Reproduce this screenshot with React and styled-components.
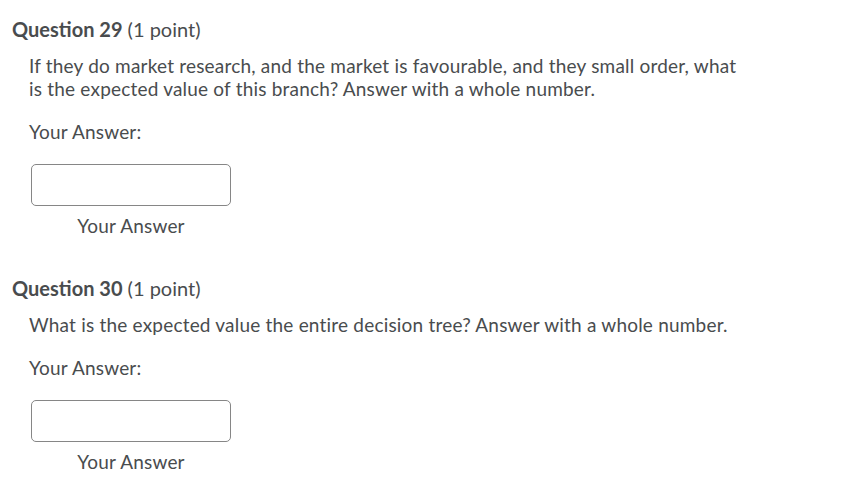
import React from "react";
import styled, { createGlobalStyle } from "styled-components";

const Global = createGlobalStyle`
  html, body { margin: 0; padding: 0; background: #fff; }
  body { font-family: Lato, "Noto Sans", sans-serif; color: #494c4e; }
`;

const Page = styled.div`
  display: flex;
  flex-direction: column;
  padding: 16px 0 0 12px;
`;

const Question = styled.section`
  display: flex;
  flex-direction: column;
  margin-bottom: ${(p) => p.$gap || 0}px;
`;

const Title = styled.h2`
  margin: 0;
  font-size: 20px;
  line-height: 26px;
  font-weight: 400;
  color: #494c4e;
  b { font-weight: 700; }
`;

const Body = styled.div`
  padding-left: 17px;
  display: flex;
  flex-direction: column;
  font-size: 19px;
  line-height: 23px;
  letter-spacing: 0.2px;
`;

const Prompt = styled.p`
  margin: 12px 0 0;
  width: 712px;
`;

const AnswerLabel = styled.p`
  margin: 20px 0 0;
`;

const Field = styled.div`
  display: flex;
  flex-direction: column;
  align-items: center;
  width: 200px;
  margin: 21px 0 0 2px;
`;

const Input = styled.input`
  box-sizing: border-box;
  width: 200px;
  height: 42px;
  border: 1px solid #868686;
  border-radius: 5px;
  background: #fff;
  outline: none;
  font: inherit;
`;

const Caption = styled.span`
  margin-top: 8px;
`;

const questions = [
  {
    num: 29,
    text:
      "If they do market research, and the market is favourable, and they small order, what is the expected value of this branch? Answer with a whole number.",
  },
  {
    num: 30,
    text:
      "What is the expected value the entire decision tree? Answer with a whole number.",
  },
];

export default function App() {
  return (
    <>
      <Global />
      <Page>
        {questions.map((q, i) => (
          <Question key={q.num} $gap={i === 0 ? 38 : 0}>
            <Title>
              <b>Question {q.num}</b> (1 point)
            </Title>
            <Body>
              <Prompt>{q.text}</Prompt>
              <AnswerLabel>Your Answer:</AnswerLabel>
              <Field>
                <Input aria-label="Your Answer" />
                <Caption>Your Answer</Caption>
              </Field>
            </Body>
          </Question>
        ))}
      </Page>
    </>
  );
}
